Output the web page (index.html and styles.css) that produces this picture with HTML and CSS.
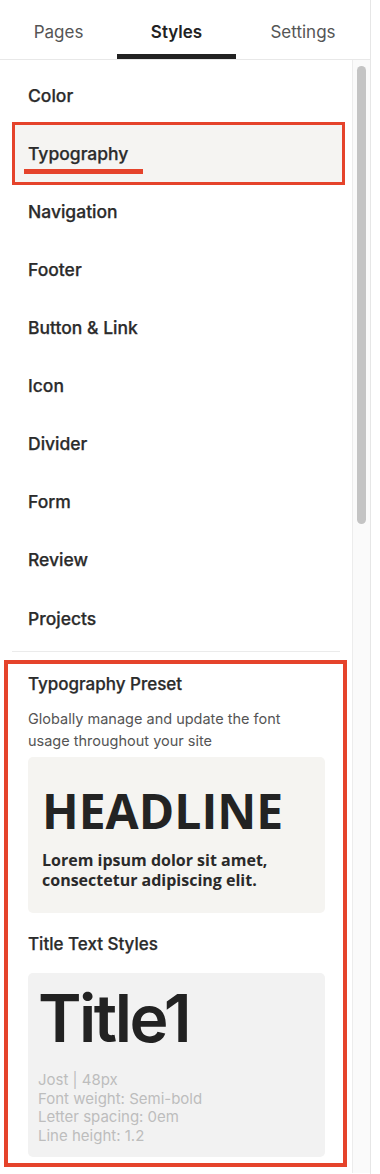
FILE: index.html
```html
<!DOCTYPE html>
<html lang="en">
<head>
<meta charset="UTF-8" />
<meta name="viewport" content="width=device-width, initial-scale=1.0">
<title>Styles panel</title>
<link rel="stylesheet" href="styles.css">
</head>
<body>

<div class="panel">
  <nav class="tabs">
    <div class="tab">Pages</div>
    <div class="tab active">Styles</div>
    <div class="tab">Settings</div>
  </nav>

  <div class="panel-body">
    <div class="content">
      <ul class="menu">
        <li>Color</li>
        <li class="selected">Typography</li>
        <li>Navigation</li>
        <li>Footer</li>
        <li>Button &amp; Link</li>
        <li>Icon</li>
        <li>Divider</li>
        <li>Form</li>
        <li>Review</li>
        <li>Projects</li>
      </ul>

      <section class="preset">
        <h3>Typography Preset</h3>
        <p class="desc">Globally manage and update the font usage throughout your site</p>
        <div class="sample headline-card">
          <div class="headline">HEADLINE</div>
          <div class="lorem">Lorem ipsum dolor sit amet, consectetur adipiscing elit.</div>
        </div>

        <h3 class="sub">Title Text Styles</h3>
        <div class="sample title-card">
          <div class="title1">Title1</div>
          <div class="meta">
            Jost | 48px<br>
            Font weight: Semi-bold<br>
            Letter spacing: 0em<br>
            Line height: 1.2
          </div>
        </div>
      </section>
    </div>

    <div class="scroll-track"><div class="scroll-thumb"></div></div>
  </div>
</div>

</body>
</html>
```

FILE: styles.css
```css
body {margin:0; font-family:Inter, 'Noto Sans', sans-serif; background:#fff; color:#2b2b2b;}
.panel {width:371px; border-right:1px solid #e6e6e6; min-height:1174px; box-sizing:border-box;}

/* tabs */
.tabs {display:grid; grid-template-columns:117px 119px 1fr; height:60px; border-bottom:1px solid #e8e8e8; box-sizing:border-box;}
.tab {display:flex; align-items:center; justify-content:center; font-size:17px; color:#555; padding-top:5px;}
.tab.active {color:#222; font-weight:600; box-shadow:inset 0 -5px 0 #222;}

.panel-body {display:flex;}
.content {width:352px;}

/* menu list */
.menu {list-style:none; margin:0; padding:6px 0 0;}
.menu li {height:58px; display:flex; align-items:center; padding-left:28px; font-size:17.5px; font-weight:500; color:#2b2b2b; -webkit-text-stroke:0.25px #2b2b2b;}
.menu li.selected {position:relative; margin:1px 10px 0 15px; height:57px; padding-left:13px; background:#f5f4f2; outline:3px solid #e5432b;}
.menu li.selected::after {content:''; position:absolute; left:9px; bottom:8px; width:119px; height:5px; background:#e5432b;}
.menu li:last-child {height:64px; padding-bottom:3px; box-sizing:border-box; border-bottom:1px solid #ebebeb; margin:0 12px; padding-left:16px;}

/* preset section */
.preset {margin:8px 5px 6px 4px; border:4px solid #e5432b; padding:10px 18px 6px 20px;}
.preset h3 {margin:0; font-size:17px; font-weight:500; -webkit-text-stroke:0.25px #2b2b2b; color:#2b2b2b; line-height:20px;}
.preset .desc {margin:14px 0 5px; font-size:14.5px; line-height:22px; color:#555; max-width:275px;}
.sample {border-radius:5px; padding:30px 14px 20px;}
.headline-card {background:#f5f4f1; height:156px; box-sizing:border-box;}
.headline {font-family:'Open Sans', sans-serif; font-weight:700; font-size:48px; line-height:48px; color:#232323;}
.lorem {font-family:'Open Sans', sans-serif; font-weight:700; font-size:16px; line-height:20px; color:#2a2a2a; margin-top:15px;}
.preset h3.sub {margin:21px 0 19px;}
.title-card {background:#f2f2f2; padding:5px 10px 11px;}
.title1 {font-size:66px; font-weight:600; line-height:80px; letter-spacing:-2.5px; color:#222;}
.meta {font-size:15px; line-height:18.7px; color:#bdbdbd; margin-top:13px;}

/* scrollbar */
.scroll-track {width:18px; border-left:1px solid #ececec; background:#fafafa; padding-top:6px; box-sizing:border-box;}
.scroll-thumb {width:9px; height:458px; margin-left:4px; border-radius:5px; background:#c4c4c4;}
```
